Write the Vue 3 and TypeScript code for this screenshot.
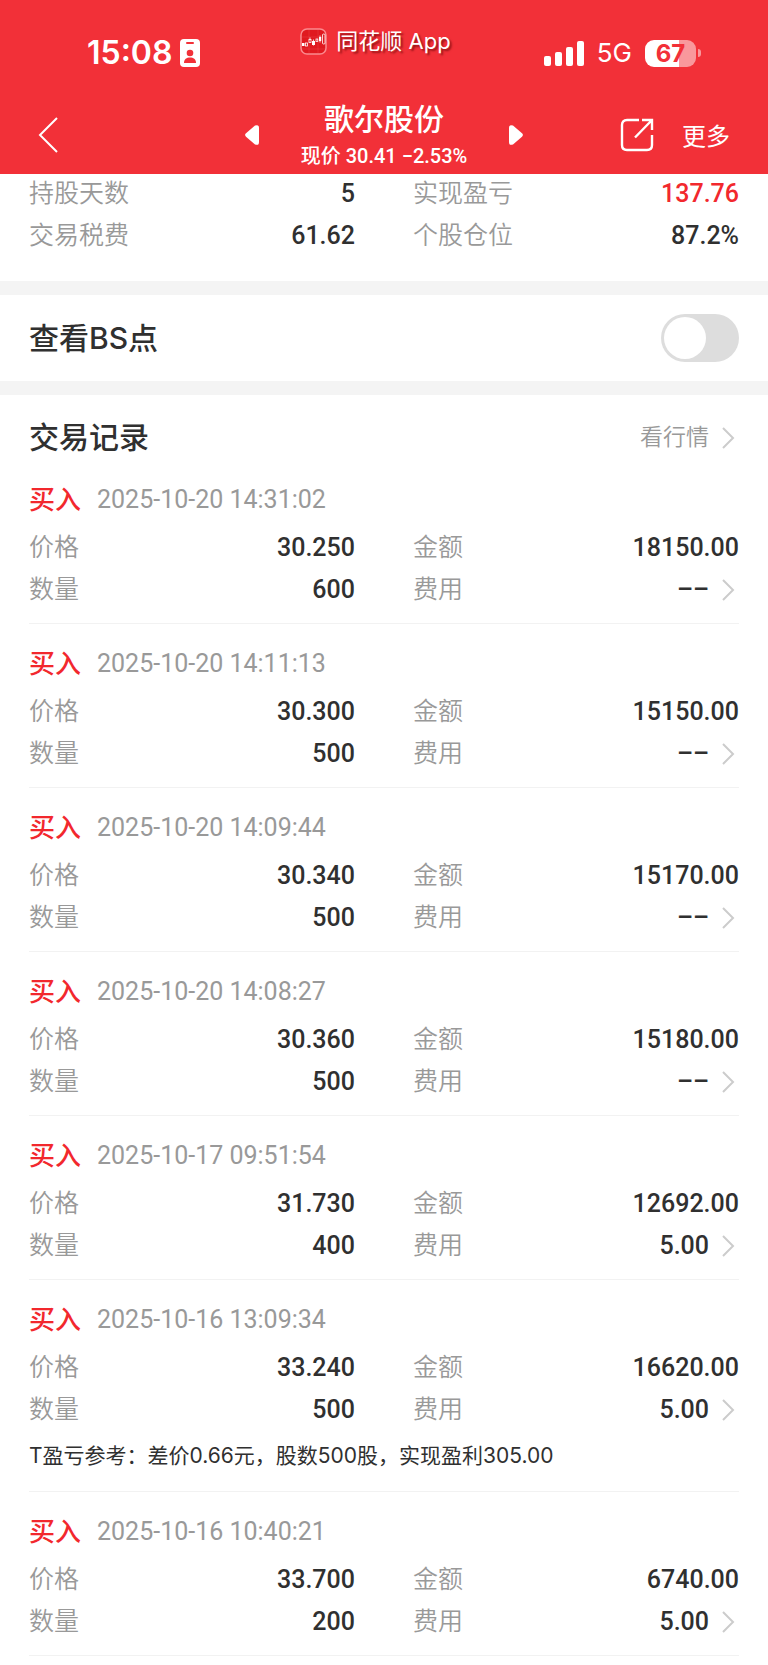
<script setup lang="ts">
import { ref } from 'vue'

interface Trade {
  time: string
  price: string
  amount: string
  quantity: string
  fee: string
  note?: string
}

interface Stat {
  label: string
  value: string
  rising?: boolean
}

const showBsPoints = ref(false)

const stats: Stat[] = [
  { label: '持股天数', value: '5' },
  { label: '实现盈亏', value: '137.76', rising: true },
  { label: '交易税费', value: '61.62' },
  { label: '个股仓位', value: '87.2%' },
]

const trades: Trade[] = [
  { time: '2025-10-20 14:31:02', price: '30.250', amount: '18150.00', quantity: '600', fee: '––' },
  { time: '2025-10-20 14:11:13', price: '30.300', amount: '15150.00', quantity: '500', fee: '––' },
  { time: '2025-10-20 14:09:44', price: '30.340', amount: '15170.00', quantity: '500', fee: '––' },
  { time: '2025-10-20 14:08:27', price: '30.360', amount: '15180.00', quantity: '500', fee: '––' },
  { time: '2025-10-17 09:51:54', price: '31.730', amount: '12692.00', quantity: '400', fee: '5.00' },
  {
    time: '2025-10-16 13:09:34',
    price: '33.240',
    amount: '16620.00',
    quantity: '500',
    fee: '5.00',
    note: 'T盈亏参考：差价0.66元，股数500股，实现盈利305.00',
  },
  { time: '2025-10-16 10:40:21', price: '33.700', amount: '6740.00', quantity: '200', fee: '5.00' },
]
</script>

<template>
  <div class="page">
    <header class="top">
      <div class="status">
        <div class="status-left">
          <span class="clock">15:08</span>
          <svg class="id-card" viewBox="0 0 20 28" width="20" height="28" aria-hidden="true">
            <rect width="20" height="28" rx="4" fill="#fff" />
            <rect x="6" y="3" width="8" height="2" rx="1" fill="#f23038" />
            <circle cx="10" cy="14" r="3.3" fill="#f23038" />
            <path d="M4 24c0-4 2.600-5.500 6-5.500s6 1.500 6 5.500z" fill="#f23038" />
          </svg>
        </div>
        <div class="brand">
          <svg viewBox="0 0 27 27" width="27" height="27" aria-hidden="true">
            <rect x="1" y="1" width="25" height="25" rx="6" fill="#e0191f" stroke="#fa8a8e" stroke-width="1.500" />
            <path d="M2 9h23M2 21h23M9 2v23M18 2v23" stroke="#ea4347" stroke-width=".5" />
            <g fill="#fff">
              <rect x="2" y="15" width="2.500" height="3" />
              <rect x="12" y="13" width="3" height="4" />
              <rect x="19" y="9" width="2.200" height="4" />
            </g>
            <g fill="none" stroke="#fff" stroke-width=".8">
              <rect x="5.500" y="15" width="2" height="3" />
              <rect x="9" y="11.500" width="2" height="3" />
              <rect x="16" y="11" width="1.800" height="2.500" />
              <rect x="22.500" y="6" width="2.500" height="10" rx="1" />
              <path d="M10 9.500v2M13.500 11.500v6M20 7.500v7" />
            </g>
          </svg>
          <span>同花顺 App</span>
        </div>
        <div class="status-right">
          <svg viewBox="0 0 40 25" width="40" height="25" fill="#fff" aria-hidden="true">
            <rect x="0" y="15" width="7" height="10" rx="2" />
            <rect x="11" y="11" width="7" height="14" rx="2" />
            <rect x="22" y="6" width="7" height="19" rx="2" />
            <rect x="33" y="0" width="7" height="25" rx="2" />
          </svg>
          <span class="network">5G</span>
          <span class="battery"><span class="charge">67</span></span>
        </div>
      </div>

      <nav class="nav">
        <div class="nav-left">
          <button type="button" class="icon-button" aria-label="返回">
            <svg viewBox="0 0 20 36" width="20" height="36" fill="none" stroke="#fff" stroke-width="2">
              <path d="M19 1 2 18l17 17" />
            </svg>
          </button>
        </div>
        <div class="stock">
          <button type="button" class="icon-button" aria-label="上一只">
            <svg viewBox="0 0 14 20" width="14" height="20" fill="#fff">
              <path d="M10 .6 1 8.300Q-.8 10 1 11.700L10 19.400Q14 21 14 17V3Q14-1 10 .6z" />
            </svg>
          </button>
          <div class="stock-text">
            <h1>歌尔股份</h1>
            <p>现价 30.41 −2.53%</p>
          </div>
          <button type="button" class="icon-button" aria-label="下一只">
            <svg viewBox="0 0 14 20" width="14" height="20" fill="#fff">
              <path d="M4 .6 13 8.300Q14.800 10 13 11.700L4 19.400Q0 21 0 17V3Q0-1 4 .6z" />
            </svg>
          </button>
        </div>
        <div class="nav-right">
          <button type="button" class="icon-button" aria-label="分享">
            <svg viewBox="0 0 34 34" width="34" height="34" fill="none" stroke="#fff" stroke-width="2.400">
              <path d="M19 2H7Q2 2 2 7v20q0 5 5 5h20q5 0 5-5V17" />
              <path d="M22 2h10v10M32 2 15 19.500" />
            </svg>
          </button>
          <button type="button" class="more">更多</button>
        </div>
      </nav>
    </header>

    <main>
      <section class="stats">
        <dl class="pairs">
          <div v-for="stat in stats" :key="stat.label" class="pair">
            <dt>{{ stat.label }}</dt>
            <dd :class="{ rising: stat.rising }">{{ stat.value }}</dd>
          </div>
        </dl>
      </section>

      <section class="toggle-row">
        <label for="bs-toggle">查看BS点</label>
        <input id="bs-toggle" v-model="showBsPoints" type="checkbox" class="switch" />
      </section>

      <section class="records">
        <div class="records-head">
          <h2>交易记录</h2>
          <a href="#quotes">
            看行情
            <svg class="chevron" viewBox="0 0 30 24" width="30" height="24" aria-hidden="true">
              <path d="M14 2l10 10-10 10" />
            </svg>
          </a>
        </div>

        <article v-for="trade in trades" :key="trade.time" class="trade">
          <div class="trade-head">
            <strong>买入</strong>
            <time>{{ trade.time }}</time>
          </div>
          <dl class="pairs">
            <div class="pair">
              <dt>价格</dt>
              <dd>{{ trade.price }}</dd>
            </div>
            <div class="pair">
              <dt>金额</dt>
              <dd>{{ trade.amount }}</dd>
            </div>
            <div class="pair">
              <dt>数量</dt>
              <dd>{{ trade.quantity }}</dd>
            </div>
            <div class="pair">
              <dt>费用</dt>
              <dd>
                {{ trade.fee }}
                <svg class="chevron" viewBox="0 0 30 24" width="30" height="24" aria-hidden="true">
                  <path d="M14 2l10 10-10 10" />
                </svg>
              </dd>
            </div>
          </dl>
          <p v-if="trade.note" class="note">{{ trade.note }}</p>
        </article>
      </section>
    </main>
  </div>
</template>

<style>
body {
  margin: 0;
  background: #fff;
}
</style>

<style scoped>
.page {
  color: #303030;
  font-family: Roboto, 'Noto Sans CJK SC', sans-serif;
  font-size: 25px;
  line-height: 42px;
}

h1,
h2,
p,
dl,
dd {
  margin: 0;
}

button {
  padding: 0;
  border: 0;
  background: none;
  color: inherit;
  font: inherit;
  cursor: pointer;
}

svg {
  display: block;
  flex: none;
}

.top {
  background: #f23038;
  color: #fff;
}

.status {
  display: grid;
  grid-template-columns: 1fr auto 1fr;
  align-items: center;
  height: 96px;
  padding: 0 67px 0 50px;
  box-sizing: border-box;
  font-family: Inter, 'Noto Sans CJK SC', sans-serif;
}

.status-left,
.status-right,
.brand {
  display: flex;
  align-items: center;
  padding-top: 10px;
}

.status-left {
  gap: 8px;
  padding-left: 37px;
}

.clock {
  font-size: 32px;
  font-weight: 600;
  line-height: 40px;
}

.brand {
  gap: 9px;
  padding: 0 0 14px;
  font-size: 22px;
  line-height: 28px;
  text-shadow: 2px 2px 2px rgb(90 0 0 / 60%);
}

.status-right {
  justify-content: flex-end;
  gap: 13px;
}

.network {
  font-size: 26px;
}

.battery {
  display: flex;
  align-items: center;
}

.battery::after {
  width: 3px;
  height: 8px;
  margin-left: 2px;
  border-radius: 0 4px 4px 0;
  background: #f9989c;
  content: '';
}

.charge {
  width: 51px;
  border-radius: 9px;
  background: linear-gradient(90deg, #fff 67%, #f9989c 67%);
  color: #f23038;
  font-size: 24px;
  font-weight: 700;
  line-height: 27px;
  text-align: center;
}

.nav {
  display: grid;
  grid-template-columns: 1fr auto 1fr;
  align-items: center;
  height: 78px;
  padding: 0 38px;
}

.icon-button {
  display: block;
}

.stock {
  display: flex;
  align-items: center;
  gap: 42px;
}

.stock-text {
  text-align: center;
}

h1 {
  font-size: 30px;
  font-weight: 500;
}

.stock-text p {
  font-size: 20px;
  font-weight: 500;
  line-height: 30px;
}

.nav-right {
  display: flex;
  align-items: center;
  justify-content: flex-end;
  gap: 28px;
}

.more {
  padding-top: 3px;
  font-size: 24px;
}

.stats,
.toggle-row,
.records {
  padding: 0 29px;
}

.stats {
  padding-top: 1px;
  padding-bottom: 22px;
  border-bottom: 14px solid #f4f4f4;
}

.pairs {
  display: grid;
  grid-template-columns: 1fr 1fr;
  column-gap: 58px;
}

.pair {
  display: flex;
  align-items: flex-start;
  justify-content: space-between;
  height: 42px;
  line-height: 38px;
}

dt {
  color: #999;
  font-weight: 350;
}

dd {
  display: flex;
  align-items: center;
  font-weight: 500;
}

.rising,
.trade-head strong {
  color: #f2282d;
}

.toggle-row {
  display: flex;
  align-items: center;
  justify-content: space-between;
  height: 86px;
  border-bottom: 14px solid #f4f4f4;
}

.toggle-row label,
h2 {
  font-family: Inter, 'Noto Sans CJK SC', sans-serif;
  font-size: 30px;
  font-weight: 500;
}

.switch {
  display: flex;
  align-items: center;
  width: 78px;
  height: 48px;
  margin: 0;
  padding: 3px;
  box-sizing: border-box;
  border-radius: 24px;
  background: #ddd;
  appearance: none;
  cursor: pointer;
}

.switch::before {
  width: 42px;
  height: 42px;
  border-radius: 50%;
  background: #fff;
  content: '';
}

.switch:checked {
  justify-content: flex-end;
  background: #f23038;
}

.records-head {
  display: flex;
  align-items: center;
  justify-content: space-between;
  height: 84px;
}

.records-head a {
  display: flex;
  align-items: center;
  padding-top: 2px;
  color: #999;
  font-size: 23px;
  font-weight: 350;
  text-decoration: none;
}

.chevron {
  fill: none;
  stroke: #ccc;
  stroke-width: 2;
}

.trade {
  margin-bottom: 19px;
  padding-bottom: 10px;
  border-bottom: 1px solid #f2f2f2;
}

.trade-head {
  display: flex;
  align-items: flex-start;
  gap: 16px;
  height: 50px;
}

.trade-head strong {
  font-size: 26px;
  font-weight: 500;
}

.trade-head time {
  color: #999;
}

.note {
  padding: 2px 0 4px;
  font-family: Inter, 'Noto Sans CJK SC', sans-serif;
  font-size: 21px;
}
</style>
